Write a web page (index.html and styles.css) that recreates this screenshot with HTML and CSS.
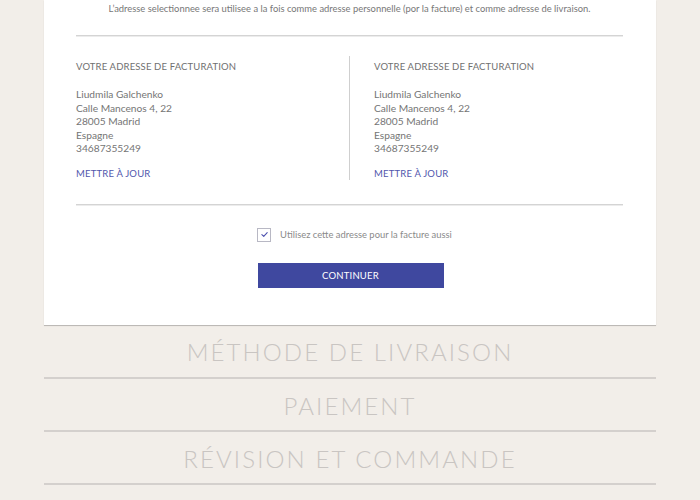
FILE: index.html
```html
<!DOCTYPE html>
<html lang="fr">
<head>
<meta charset="utf-8">
<title>Adresse</title>
<link rel="stylesheet" href="styles.css">
</head>
<body>
<div class="page">
  <section class="card">
    <p class="intro">L’adresse selectionnee sera utilisee a la fois comme adresse personnelle (por la facture) et comme adresse de livraison.</p>
    <div class="rule"></div>
    <div class="cols">
      <div class="col">
        <h3 class="col-title">VOTRE ADRESSE DE FACTURATION</h3>
        <address class="addr">
          <span>Liudmila Galchenko</span>
          <span>Calle Mancenos 4, 22</span>
          <span>28005 Madrid</span>
          <span>Espagne</span>
          <span>34687355249</span>
        </address>
        <a class="update" href="#">METTRE À JOUR</a>
      </div>
      <div class="col col-right">
        <h3 class="col-title">VOTRE ADRESSE DE FACTURATION</h3>
        <address class="addr">
          <span>Liudmila Galchenko</span>
          <span>Calle Mancenos 4, 22</span>
          <span>28005 Madrid</span>
          <span>Espagne</span>
          <span>34687355249</span>
        </address>
        <a class="update" href="#">METTRE À JOUR</a>
      </div>
    </div>
    <div class="rule rule-2"></div>
    <label class="check-row">
      <span class="box">
        <svg viewBox="0 0 12 12" width="9" height="9"><path d="M2.5 6.2 L5 8.6 L9.6 3.4" fill="none" stroke="#4b4fae" stroke-width="1.4" stroke-linecap="round" stroke-linejoin="round"/></svg>
      </span>
      <span class="check-label">Utilisez cette adresse pour la facture aussi</span>
    </label>
    <div class="btn-row">
      <button class="btn">CONTINUER</button>
    </div>
  </section>
  <div class="step">MÉTHODE DE LIVRAISON</div>
  <div class="step">PAIEMENT</div>
  <div class="step">RÉVISION ET COMMANDE</div>
</div>
</body>
</html>
```
FILE: styles.css
```css
html, body {
  margin: 0;
  padding: 0;
  background: #f2eee9;
  font-family: Lato, "Open Sans", sans-serif;
}
.page {
  margin: 0 44px;
}
.card {
  background: #fff;
  padding: 3px 33px 37px 32px;
  box-shadow: 0 1px 1px rgba(0,0,0,0.12), 0 1px 0 #d6d3d0;
}
.intro {
  margin: 0;
  text-align: center;
  font-size: 9.4px;
  line-height: 12px;
  color: #777;
}
.rule {
  margin-top: 20px;
  height: 1px;
  background: #d4d4d4;
  border-bottom: 1px solid #ececec;
}
.cols {
  display: grid;
  grid-template-columns: 273px 1fr;
  margin-top: 19px;
}
.col {
  display: flex;
  flex-direction: column;
  align-items: flex-start;
  padding-top: 2px;
}
.col-right {
  border-left: 1px solid #cfcfcf;
  padding-left: 24px;
}
.col-title {
  margin: 0;
  font-weight: 400;
  font-size: 9.5px;
  line-height: 18px;
  letter-spacing: 0.15px;
  color: #707070;
}
.addr {
  font-style: normal;
  margin-top: 12px;
  display: flex;
  flex-direction: column;
  font-size: 10.2px;
  line-height: 13.6px;
  color: #757575;
}
.update {
  margin-top: 12px;
  font-size: 9.5px;
  line-height: 12px;
  letter-spacing: 0.2px;
  color: #5156ad;
  text-decoration: none;
}
.rule-2 {
  margin-top: 24px;
}
.check-row {
  display: flex;
  align-items: center;
  justify-content: center;
  gap: 9px;
  margin-top: 22px;
  padding-left: 10px;
}
.box {
  width: 12px;
  height: 12px;
  border: 1px solid #b8b8c4;
  display: flex;
  align-items: center;
  justify-content: center;
}
.check-label {
  font-size: 9.4px;
  color: #8a8a8a;
}
.btn-row {
  display: flex;
  justify-content: center;
  margin-top: 21px;
  padding-left: 2px;
}
.btn {
  width: 186px;
  height: 25px;
  border: none;
  background: #3f489f;
  color: #fff;
  font-family: Lato, sans-serif;
  font-size: 9.5px;
  letter-spacing: 0.2px;
  padding: 0;
}
.step {
  display: flex;
  align-items: center;
  justify-content: center;
  padding-top: 2px;
  box-sizing: border-box;
  height: 54px;
  border-bottom: 2px solid #d4d0cd;
  font-size: 24px;
  font-weight: 300;
  letter-spacing: 2.1px;
  color: #c9c5c2;
}
.step + .step {
  height: 53px;
}
```
